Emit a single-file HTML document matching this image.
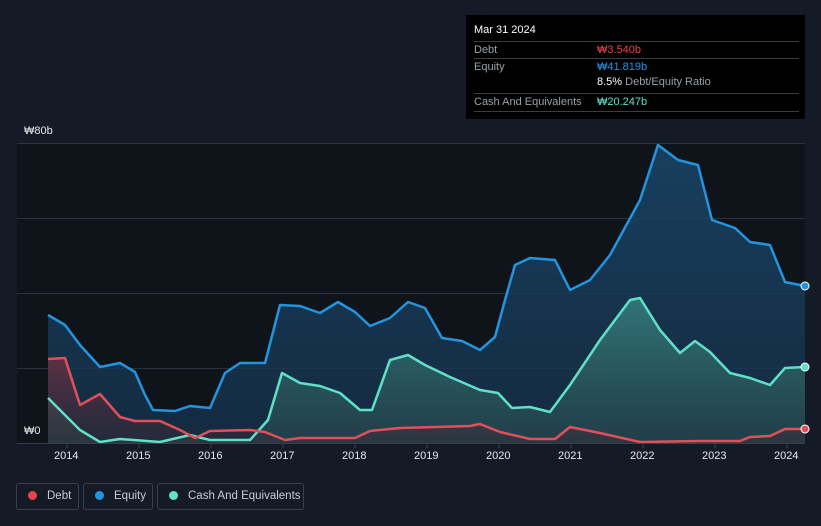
<!DOCTYPE html>
<html><head><style>
html,body{margin:0;width:821px;height:526px;overflow:hidden}
body{background:#151b26;font-family:"Liberation Sans","Noto Sans CJK KR",sans-serif;position:relative}
.tip{position:absolute;left:466px;top:15px;width:339px;height:104px;background:#000;color:#fff;font-size:11px}
.row{position:absolute;left:8px;right:6px;border-top:1px solid #3a3d42;height:17px;line-height:17px;color:#9aa0a6}
.lg{position:absolute;top:483px;height:27px;border:1px solid #3a404a;border-radius:3px;color:#c8ccd2;font-size:11.5px;line-height:25px;box-sizing:border-box;white-space:nowrap}
.lg i{display:inline-block;width:9px;height:9px;border-radius:50%;margin:0 10px 0 11px;vertical-align:-1px}
.ax{position:absolute;top:450px;color:#e4e6ea;font-size:11px}
</style></head><body>
<svg width="821" height="526" style="position:absolute;left:0;top:0">
<defs>
<linearGradient id="ge" x1="0" y1="0" x2="0" y2="1"><stop offset="0" stop-color="#1a4a6e" stop-opacity=".8"/><stop offset="1" stop-color="#15304a" stop-opacity=".8"/></linearGradient>
<linearGradient id="gc" x1="0" y1="0" x2="0" y2="1"><stop offset="0" stop-color="#3a8a86" stop-opacity=".75"/><stop offset="1" stop-color="#2a4a4e" stop-opacity=".6"/></linearGradient>
<linearGradient id="gd" x1="0" y1="0" x2="0" y2="1"><stop offset="0" stop-color="#8a3040" stop-opacity=".6"/><stop offset="1" stop-color="#3a2a34" stop-opacity=".4"/></linearGradient>
</defs>
<rect x="17" y="143" width="788" height="300" fill="#0f131a"/>
<g stroke="#2c323b" stroke-width="1"><line x1="17" x2="805" y1="143.5" y2="143.5"/><line x1="17" x2="805" y1="218.5" y2="218.5"/><line x1="17" x2="805" y1="293.5" y2="293.5"/><line x1="17" x2="805" y1="368.5" y2="368.5"/></g>
<polygon fill="url(#ge)" points="48,443 48,315 65,325 80,345 100,367 120,363 135,372 145,395 153,410 175,411 190,406 210,408 225,373 240,363 265,363 280,305 300,306 320,313 338,302 355,312 370,326 390,318 408,302 425,308 442,338 462,341 480,350 495,337 505,300 515,265 530,258 555,260 570,290 590,280 610,255 640,200 658,145 678,160 698,165 712,220 735,228 750,242 770,245 785,282 805,286 805,443"/>
<polygon fill="url(#gc)" points="48,443 48,398 65,415 80,430 100,442 120,439 160,442 190,435 210,440 250,440 268,420 282,373 300,383 320,386 340,393 360,410 372,410 390,360 408,355 425,365 450,377 480,390 498,393 512,408 530,407 550,412 570,385 600,340 630,300 640,298 660,330 680,353 695,341 710,352 730,373 750,378 770,385 785,368 805,367 805,443"/>
<polygon fill="url(#gd)" points="48,443 48,359 65,358 80,405 100,394 120,417 135,421 160,421 180,430 195,438 210,431 250,430 265,432 285,440 300,438 340,438 355,438 370,431 400,428 470,426 480,424 500,432 530,439 555,439 570,427 600,433 640,442 700,441 740,441 750,437 770,436 785,429 805,429 805,443"/>
<g fill="none" stroke-width="2.5" stroke-linejoin="round">
<polyline stroke="#2394df" points="48,315 65,325 80,345 100,367 120,363 135,372 145,395 153,410 175,411 190,406 210,408 225,373 240,363 265,363 280,305 300,306 320,313 338,302 355,312 370,326 390,318 408,302 425,308 442,338 462,341 480,350 495,337 505,300 515,265 530,258 555,260 570,290 590,280 610,255 640,200 658,145 678,160 698,165 712,220 735,228 750,242 770,245 785,282 805,286"/>
<polyline stroke="#5fe0c8" points="48,398 65,415 80,430 100,442 120,439 160,442 190,435 210,440 250,440 268,420 282,373 300,383 320,386 340,393 360,410 372,410 390,360 408,355 425,365 450,377 480,390 498,393 512,408 530,407 550,412 570,385 600,340 630,300 640,298 660,330 680,353 695,341 710,352 730,373 750,378 770,385 785,368 805,367"/>
<polyline stroke="#e0505a" points="48,359 65,358 80,405 100,394 120,417 135,421 160,421 180,430 195,438 210,431 250,430 265,432 285,440 300,438 340,438 355,438 370,431 400,428 470,426 480,424 500,432 530,439 555,439 570,427 600,433 640,442 700,441 740,441 750,437 770,436 785,429 805,429"/>
</g>
<circle cx="805" cy="286" r="4" fill="#2394df" stroke="#fff" stroke-width="1"/>
<circle cx="805" cy="367" r="4" fill="#5fe0c8" stroke="#fff" stroke-width="1"/>
<circle cx="805" cy="429" r="4" fill="#e0505a" stroke="#fff" stroke-width="1"/>
<line x1="17" x2="805" y1="443.5" y2="443.5" stroke="#3a404a"/>
<g stroke="#3a404a"><line x1="67" x2="67" y1="444" y2="448"/><line x1="139" x2="139" y1="444" y2="448"/><line x1="211" x2="211" y1="444" y2="448"/><line x1="283" x2="283" y1="444" y2="448"/><line x1="355" x2="355" y1="444" y2="448"/><line x1="427" x2="427" y1="444" y2="448"/><line x1="499" x2="499" y1="444" y2="448"/><line x1="571" x2="571" y1="444" y2="448"/><line x1="643" x2="643" y1="444" y2="448"/><line x1="715" x2="715" y1="444" y2="448"/><line x1="787" x2="787" y1="444" y2="448"/></g>
</svg>
<div style="position:absolute;left:24px;top:125px;color:#e4e6ea;font-size:11px">₩80b</div>
<div style="position:absolute;left:24px;top:425px;color:#e4e6ea;font-size:11px">₩0</div>
<div class="ax" style="left:54px">2014</div><div class="ax" style="left:126px">2015</div><div class="ax" style="left:198px">2016</div><div class="ax" style="left:270px">2017</div><div class="ax" style="left:342px">2018</div><div class="ax" style="left:414px">2019</div><div class="ax" style="left:486px">2020</div><div class="ax" style="left:558px">2021</div><div class="ax" style="left:630px">2022</div><div class="ax" style="left:702px">2023</div><div class="ax" style="left:774px">2024</div>
<div class="tip">
<div style="position:absolute;left:8px;top:9px;font-size:11px">Mar 31 2024</div>
<div class="row" style="top:26px">Debt<span style="position:absolute;left:123px;color:#e8424c">₩3.540b</span></div>
<div class="row" style="top:43px">Equity<span style="position:absolute;left:123px;color:#2394df">₩41.819b</span></div>
<div style="position:absolute;left:131px;top:61px;color:#9aa0a6"><b style="color:#fff;font-weight:normal">8.5%</b> Debt/Equity Ratio</div>
<div class="row" style="top:78px;border-bottom:1px solid #3a3d42">Cash And Equivalents<span style="position:absolute;left:123px;color:#5fe0c8">₩20.247b</span></div>
</div>
<div class="lg" style="left:16px;width:63px"><i style="background:#e8424c"></i>Debt</div>
<div class="lg" style="left:83px;width:70px"><i style="background:#2394df"></i>Equity</div>
<div class="lg" style="left:157px;width:147px"><i style="background:#5fe0c8"></i>Cash And Equivalents</div>
</body></html>
